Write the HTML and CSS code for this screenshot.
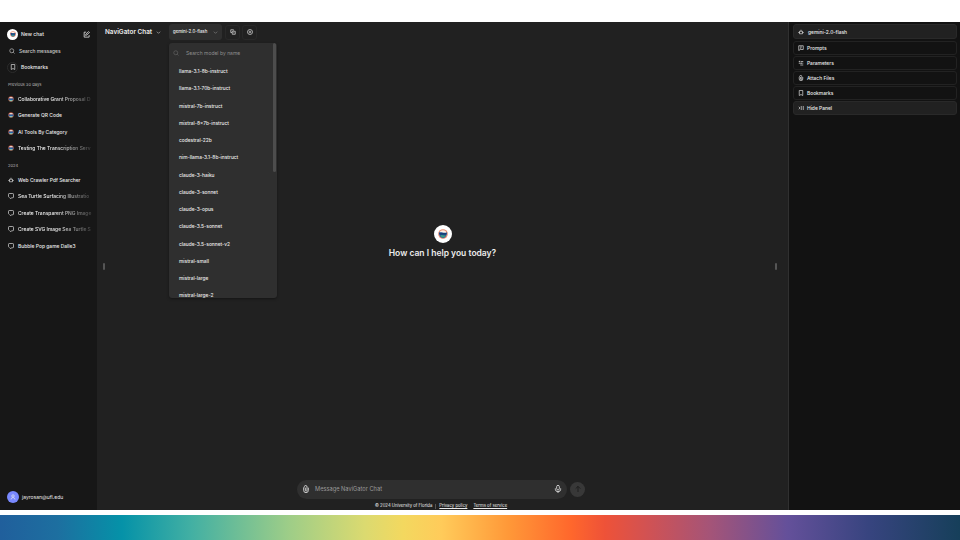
FILE: index.html
```html
<!DOCTYPE html>
<html lang="en">
<head>
<meta charset="utf-8">
<title>NaviGator Chat</title>
<link rel="stylesheet" href="styles.css">
</head>
<body>
<svg class="defs" aria-hidden="true">
  <symbol id="chat" viewBox="0 0 24 24"><path d="M5 2h14a3 3 0 0 1 3 3v11a3 3 0 0 1-3 3h-5l-3 4-3-4H7M2 15V5a3 3 0 0 1 3-3M2 15l3 3"/></symbol>
  <symbol id="bookmark" viewBox="0 0 24 24"><path d="M5 2h14v20l-7-4-7 4z"/></symbol>
  <symbol id="search" viewBox="0 0 24 24"><circle cx="11" cy="11" r="8"/><path d="m17 17 5 5"/></symbol>
  <symbol id="clip" viewBox="0 0 24 24"><path d="M10 8v8a2.500 2.500 0 0 0 5 0V6a4 4 0 0 0-8-1L5 9v7a7 7 0 0 0 14 0V8"/></symbol>
  <symbol id="down" viewBox="0 0 24 24"><path d="m4 8 8 8 8-8"/></symbol>
  <symbol id="bot" viewBox="0 0 24 24"><path d="M6 9h12v10H6zM1 14h5M18 14h5M12 3v6"/></symbol>
  <symbol id="logo" viewBox="0 0 24 24"><g stroke="none"><circle cx="12" cy="12" r="11.500" fill="#e58a70"/><circle cx="12" cy="11" r="8" fill="#fff0e5"/><path fill="#20549b" d="M2 9c5-4 12 3 20-1-1 8-4 13-10 14-6-1-9-6-10-13z"/><path fill="#3e9b82" d="M5 16c5-4 9 2 14-2-2 5-4 7-8 7z"/><path fill="#17386d" d="M3 10h17v3H4z"/></g></symbol>
  <symbol id="logo-small" viewBox="0 0 24 24"><g stroke="none"><circle cx="12" cy="12" r="11" fill="#b5523e"/><path fill="#e8cfc4" d="M6 4h12v6H6z"/><path fill="#2a62a5" d="M2 10h20v6H3z"/><path fill="#7fc3b4" d="M6 16h12v5H6z"/></g></symbol>
</svg>
<div class="app">
  <nav class="side">
    <div class="new"><span class="avatar"><svg><use href="#logo"/></svg></span><span>New chat</span><svg class="edit" viewBox="0 0 24 24"><path d="M11 4H4v17h17v-7M9 15l1-4 9-9 3 3-9 9z"/></svg></div>
    <div class="tool t-search"><span class="ring plain"><svg><use href="#search"/></svg></span><span>Search messages</span></div>
    <div class="tool t-book"><span class="ring"><svg><use href="#bookmark"/></svg></span><span>Bookmarks</span></div>
    <h2 class="prev">Previous 30 days</h2>
    <ul>
      <li class="fade"><svg class="mini"><use href="#logo-small"/></svg><span>Collaborative Grant Proposal D</span></li>
      <li><svg class="mini"><use href="#logo-small"/></svg><span>Generate QR Code</span></li>
      <li><svg class="mini"><use href="#logo-small"/></svg><span>AI Tools By Category</span></li>
      <li class="fade"><svg class="mini"><use href="#logo-small"/></svg><span>Testing The Transcription Serv</span></li>
    </ul>
    <h2 class="year">2024</h2>
    <ul>
      <li><svg><use href="#bot"/></svg><span>Web Crawler Pdf Searcher</span></li>
      <li class="fade"><svg><use href="#chat"/></svg><span>Sea Turtle Surfacing Illustratio</span></li>
      <li class="fade"><svg><use href="#chat"/></svg><span>Create Transparent PNG Image</span></li>
      <li class="fade"><svg><use href="#chat"/></svg><span>Create SVG Image Sea Turtle S</span></li>
      <li><svg><use href="#chat"/></svg><span>Bubble Pop game Dalle3</span></li>
    </ul>
    <div class="user"><span class="face"><svg viewBox="0 0 24 24"><circle cx="12" cy="8" r="5"/><path d="M4 22v-3l5-4h6l5 4v3"/></svg></span><span>jayrosan@ufl.edu</span></div>
  </nav>
  <main>
    <header>
      <span class="brand">NaviGator Chat</span><svg class="bdown"><use href="#down"/></svg>
      <div class="model"><div class="picker"><span>gemini-2.0-flash</span><svg><use href="#down"/></svg></div>
        <div class="menu">
          <div class="find"><svg><use href="#search"/></svg><span>Search model by name</span></div>
          <ul>
            <li>llama-3.1-8b-instruct</li><li>llama-3.1-70b-instruct</li><li>mistral-7b-instruct</li><li>mixtral-8x7b-instruct</li><li>codestral-22b</li><li>nim-llama-3.1-8b-instruct</li><li>claude-3-haiku</li><li>claude-3-sonnet</li><li>claude-3-opus</li><li>claude-3.5-sonnet</li><li>claude-3.5-sonnet-v2</li><li>mistral-small</li><li>mistral-large</li><li>mistral-large-2</li>
          </ul>
          <i class="thumb"></i>
        </div>
      </div>
      <span class="hbtn"><svg viewBox="0 0 24 24"><path d="M8 14H3V3h11v3M9 9h12v12H9zM13 15h4"/></svg></span>
      <span class="hbtn second"><svg viewBox="0 0 24 24"><circle cx="12" cy="12" r="10"/><path d="M12 7v10M7 12h10"/></svg></span>
    </header>
    <div class="hello"><i class="grip"></i><div class="mid"><span class="badge"><svg><use href="#logo"/></svg></span><h1>How can I help you today?</h1></div><i class="grip"></i></div>
    <div class="composer"><div class="input"><svg class="attach"><use href="#clip"/></svg><span>Message NaviGator Chat</span><svg class="mic" viewBox="0 0 24 24"><rect x="8" y="1" width="8" height="14" rx="4"/><path d="M4 10v3a8 7 0 0 0 16 0v-3M12 20v4"/></svg></div><span class="send"><svg viewBox="0 0 24 24"><path d="M12 21V4M5 11l7-7 7 7"/></svg></span></div>
    <footer><span class="copy">© 2024 University of Florida</span><i></i><u class="privacy">Privacy policy</u><u class="terms">Terms of service</u></footer>
  </main>
  <aside>
    <div class="item lit first"><svg><use href="#bot"/></svg><span>gemini-2.0-flash</span></div>
    <div class="item"><svg viewBox="0 0 24 24"><path d="M3 3h18v15H9l-6 4zM8 8h8M8 13h5"/></svg><span>Prompts</span></div>
    <div class="item"><svg viewBox="0 0 24 24"><path d="M3 6h4M11 6h10M3 13h11M18 13h3M9 20h12M7 3v6M15 10v6"/></svg><span>Parameters</span></div>
    <div class="item"><svg><use href="#clip"/></svg><span>Attach Files</span></div>
    <div class="item"><svg><use href="#bookmark"/></svg><span>Bookmarks</span></div>
    <div class="item lit"><svg viewBox="0 0 24 24"><path d="M3 7l5 5-5 5M13 4v16M21 4v16"/></svg><span>Hide Panel</span></div>
  </aside>
</div>
<div class="rainbow"></div>
</body>
</html>
```
FILE: styles.css
```css
* { box-sizing: border-box; }
body { margin: 0; width: 960px; height: 540px; overflow: hidden; padding-top: 22px; background: #fff; color: #ececec; font: 500 5px/8px Inter, "Liberation Sans", sans-serif; }
ul, h1, h2 { margin: 0; padding: 0; list-style: none; }
svg { display: block; flex: none; width: 6px; height: 6px; fill: none; stroke: currentColor; stroke-width: 2.6; }
span, u, li { white-space: nowrap; }
.defs { position: absolute; width: 0; height: 0; }
.app { display: flex; height: 488px; background: #212121; }
.rainbow { height: 25px; margin-top: 5px; background: linear-gradient(90deg, #205f9c, #1d6fa0 6%, #0592a8 12.7%, #43b0a3 20%, #9dcd88 30%, #dbda70 38%, #f3d85f 42%, #ffcb5a 46%, #ff9838 53%, #ff672c 59.5%, #ee5238 63%, #d05254 67.6%, #a45478 74%, #64509a 82%, #37447f 90.5%, #163f5a); }

.side { display: flex; flex-direction: column; width: 97px; padding: 4px 7px 5px; background: #171717; }
.new { display: flex; align-items: center; height: 16px; gap: 3px; font-size: 5.1px; }
.avatar, .badge { display: grid; place-items: center; width: 11px; height: 11px; border-radius: 50%; background: #fff; }
.edit { width: 7px; height: 7px; margin-left: auto; }
.tool { display: flex; align-items: center; height: 16px; gap: 3px; }
.t-search { height: 17px; color: #c8c8c8; font-size: 4.9px; }
.t-search .ring { margin-left: -1px; }
.t-search span + span { margin-left: -1px; }
.ring { display: grid; place-items: center; width: 11px; height: 11px; border: 1px solid #2b2b2b; border-radius: 50%; }
.plain { border-color: transparent; }
h2 { padding-left: 1px; font-size: 4.1px; font-weight: 400; color: #b4b4b4; }
.prev { height: 15.5px; line-height: 20px; }
.year { height: 15.5px; line-height: 20px; }
.side li { display: flex; align-items: center; height: 16.45px; padding-left: 1px; gap: 4px; font-size: 4.95px; }
.mini { width: 6px; height: 6px; }
.fade span { width: 74px; margin-right: -2px; -webkit-mask: linear-gradient(90deg, #000 50%, #0003 98%); mask: linear-gradient(90deg, #000 50%, #0003 98%); }
.user { display: flex; align-items: center; margin-top: auto; gap: 3px; height: 16px; font-weight: 400; }
.face { display: grid; place-items: center; width: 12px; height: 12px; border-radius: 50%; background: #7989ff; }

main { display: flex; flex-direction: column; width: 691px; }
header { display: flex; align-items: center; height: 20px; padding-left: 8px; }
.brand { width: 47px; font-size: 6.4px; font-weight: 600; }
.bdown { width: 5px; height: 5px; margin: 0 8px 0 4px; color: #ddd; }
.model { position: relative; }
.picker { display: flex; align-items: center; justify-content: space-between; width: 53px; height: 16px; padding: 0 4px; border-radius: 3px; background: #2f2f2f; font-size: 4.3px; }
.picker svg { width: 5px; height: 5px; color: #999; }
.hbtn { display: grid; place-items: center; width: 15px; height: 15px; margin-left: 3px; border: 1px solid #292929; border-radius: 3px; }
.second { margin-left: 2px; }
.menu { position: absolute; z-index: 2; top: 19px; left: 0; width: 108px; height: 255px; overflow: hidden; border-radius: 3px; background: #2f2f2f; box-shadow: 0 1px 3px #0006; }
.find { display: flex; align-items: center; height: 20px; gap: 7px; padding-left: 4px; color: #8e8e8e; font-weight: 400; }
.find svg { color: #666; }
.menu li { height: 17.28px; padding-left: 10px; line-height: 17.9px; font-size: 4.85px; }
.thumb { position: absolute; top: 0; right: 1px; width: 3px; height: 129px; border-radius: 2px; background: #4d4d4d; }
.hello { display: flex; flex: 1; align-items: center; justify-content: space-between; padding: 0 11px 38px 6px; }
.grip { width: 2px; height: 7px; margin-top: 50px; border-radius: 1px; background: #555; }
.mid { display: flex; flex-direction: column; align-items: center; margin-left: 5px; }
.badge { width: 18px; height: 18px; }
.badge svg { width: 10px; height: 10px; }
h1 { margin-top: 4px; font-size: 8.5px; font-weight: 600; line-height: 12px; }
.composer { display: flex; align-items: center; gap: 3px; height: 20px; margin-left: 200px; }
.input { display: flex; align-items: center; width: 270px; height: 19px; padding: 0 5px; border-radius: 10px; background: #2f2f2f; color: #999; font-size: 5.7px; font-weight: 400; }
.attach, .mic { width: 8px; height: 8px; color: #ddd; }
.attach { margin-right: 5px; }
.mic { margin-left: auto; }
.send { display: grid; place-items: center; width: 15px; height: 15px; border-radius: 50%; background: #383838; color: #1c1c1c; }
.send svg { width: 8px; height: 8px; }
footer { display: flex; align-items: center; height: 11px; padding: 3px 0 0 278px; font-size: 4.25px; font-weight: 400; }
footer i { width: 1px; height: 5px; margin: 0 3px; background: #555; }
.terms { margin-left: 6px; }

aside { width: 172px; padding: 2px 3px 0 4px; border-left: 1px solid #303030; background: #121212; }
.item { display: flex; align-items: center; height: 14px; gap: 3px; margin-bottom: 1px; padding-left: 4px; border: 1px solid #222; border-radius: 3px; font-size: 4.9px; }
.item svg { width: 6px; height: 6px; }
.lit { background: #212121; border-color: #292929; }
.first { height: 15px; margin-bottom: 2px; }
.first span { margin-left: 1px; }
```
